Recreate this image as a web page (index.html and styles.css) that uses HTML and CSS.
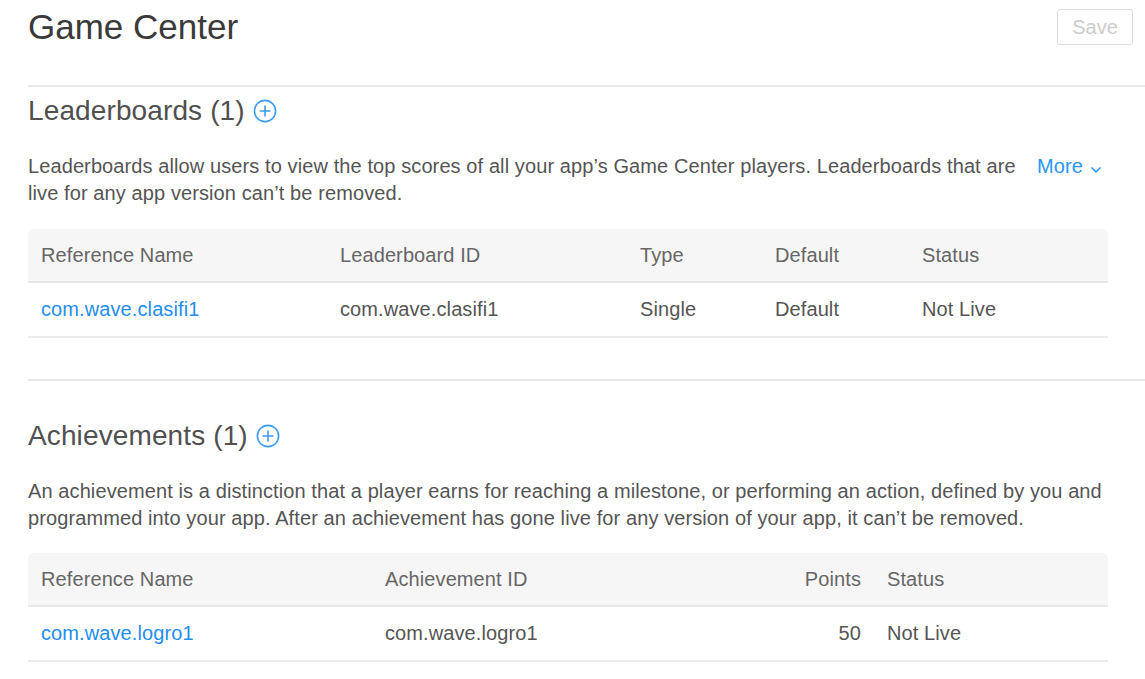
FILE: index.html
```html
<!DOCTYPE html>
<html lang="en">
<head>
<meta charset="utf-8">
<title>Game Center</title>
<link rel="stylesheet" href="styles.css">
</head>
<body>
<main class="page">
  <header class="page-header">
    <h1 class="page-title">Game Center</h1>
    <button class="save-btn" type="button" disabled>Save</button>
  </header>

  <section class="section section-first">
    <h2 class="section-title">Leaderboards (1)
      <span class="add-icon" aria-label="Add">
        <svg width="24" height="24" viewBox="0 0 24 24"><circle cx="12" cy="12" r="10.6" fill="none" stroke="#3b9cf2" stroke-width="1.6"/><path d="M12 6.6v10.8M6.6 12h10.8" stroke="#3b9cf2" stroke-width="1.6" fill="none"/></svg>
      </span>
    </h2>
    <div class="desc-row">
      <p class="desc desc-narrow">Leaderboards allow users to view the top scores of all your app’s Game Center players. Leaderboards that are live for any app version can’t be removed.</p>
      <a class="more-link" href="#">More <svg class="chev" width="12" height="8" viewBox="0 0 12 8"><path d="M1.5 1.5l4.5 4.5 4.5-4.5" fill="none" stroke="#2a96f5" stroke-width="1.5"/></svg></a>
    </div>
    <table class="data-table">
      <colgroup>
        <col style="width:299px"><col style="width:300px"><col style="width:135px"><col style="width:147px"><col>
      </colgroup>
      <thead>
        <tr><th>Reference Name</th><th>Leaderboard ID</th><th>Type</th><th>Default</th><th>Status</th></tr>
      </thead>
      <tbody>
        <tr><td><a class="link" href="#">com.wave.clasifi1</a></td><td>com.wave.clasifi1</td><td>Single</td><td>Default</td><td>Not Live</td></tr>
      </tbody>
    </table>
  </section>

  <section class="section section-second">
    <h2 class="section-title">Achievements (1)
      <span class="add-icon" aria-label="Add">
        <svg width="24" height="24" viewBox="0 0 24 24"><circle cx="12" cy="12" r="10.6" fill="none" stroke="#3b9cf2" stroke-width="1.6"/><path d="M12 6.6v10.8M6.6 12h10.8" stroke="#3b9cf2" stroke-width="1.6" fill="none"/></svg>
      </span>
    </h2>
    <p class="desc">An achievement is a distinction that a player earns for reaching a milestone, or performing an action, defined by you and programmed into your app. After an achievement has gone live for any version of your app, it can’t be removed.</p>
    <table class="data-table">
      <colgroup>
        <col style="width:344px"><col style="width:308px"><col style="width:194px"><col>
      </colgroup>
      <thead>
        <tr><th>Reference Name</th><th>Achievement ID</th><th class="num">Points</th><th>Status</th></tr>
      </thead>
      <tbody>
        <tr><td><a class="link" href="#">com.wave.logro1</a></td><td>com.wave.logro1</td><td class="num">50</td><td>Not Live</td></tr>
      </tbody>
    </table>
  </section>
</main>
</body>
</html>
```

FILE: styles.css
```css
* { box-sizing: border-box; }

html, body {
  margin: 0;
  padding: 0;
  background: #ffffff;
}

body {
  font-family: "Liberation Sans", Arial, Helvetica, sans-serif;
  font-size: 20px;
  line-height: 27px;
  letter-spacing: 0.1px;
  color: #555555;
}

.page {
  padding-left: 28px;
}

.page-header {
  display: flex;
  justify-content: space-between;
  align-items: flex-start;
  padding: 7px 12px 38px 0;
  border-bottom: 2px solid #e8e8e8;
}

.page-title {
  margin: 0;
  font-size: 35px;
  line-height: 40px;
  font-weight: normal;
  letter-spacing: 0;
  color: #3a3a3a;
}

.save-btn {
  margin-top: 2px;
  width: 76px;
  height: 36px;
  padding: 0;
  border: 1px solid #dedede;
  border-radius: 3px;
  background: #ffffff;
  font-family: inherit;
  font-size: 20px;
  color: #cccccc;
}

.section {
  padding-right: 37px;
}

.section-first {
  padding-top: 7px;
  padding-bottom: 41px;
  border-bottom: 2px solid #e8e8e8;
}

.section-second {
  padding-top: 38px;
}

.section-title {
  display: flex;
  align-items: center;
  gap: 8px;
  margin: 0;
  font-size: 28px;
  line-height: 34px;
  font-weight: normal;
  letter-spacing: 0.12px;
  color: #505050;
}

.add-icon {
  display: inline-flex;
  width: 24px;
  height: 24px;
  margin-top: -1px;
}

.desc-row {
  display: flex;
  align-items: flex-start;
  margin-top: 25px;
}

.desc {
  margin: 25px 0 0 0;
  color: #555555;
}

.desc-row .desc {
  margin: 0;
}

.desc-narrow {
  max-width: 1005px;
}

.more-link {
  margin-left: auto;
  width: 71px;
  display: inline-flex;
  align-items: center;
  gap: 7px;
  color: #2a96f5;
  text-decoration: none;
  white-space: nowrap;
}

.chev {
  margin-top: 6px;
}

.data-table {
  width: 100%;
  margin-top: 22px;
  border-collapse: separate;
  border-spacing: 0;
  table-layout: fixed;
}

.section-second .data-table {
  margin-top: 21px;
}

.data-table th {
  height: 54px;
  padding: 0 13px;
  background: #f6f6f6;
  border-bottom: 2px solid #e8e8e8;
  text-align: left;
  font-weight: normal;
  color: #666666;
  vertical-align: middle;
}

.data-table th:first-child { border-top-left-radius: 6px; }
.data-table th:last-child { border-top-right-radius: 6px; }

.data-table td {
  height: 55px;
  padding: 0 13px;
  border-bottom: 2px solid #ebebeb;
  color: #555555;
  vertical-align: middle;
}

.data-table .num {
  text-align: right;
}

.link {
  color: #1f8ef1;
  text-decoration: none;
}
```
